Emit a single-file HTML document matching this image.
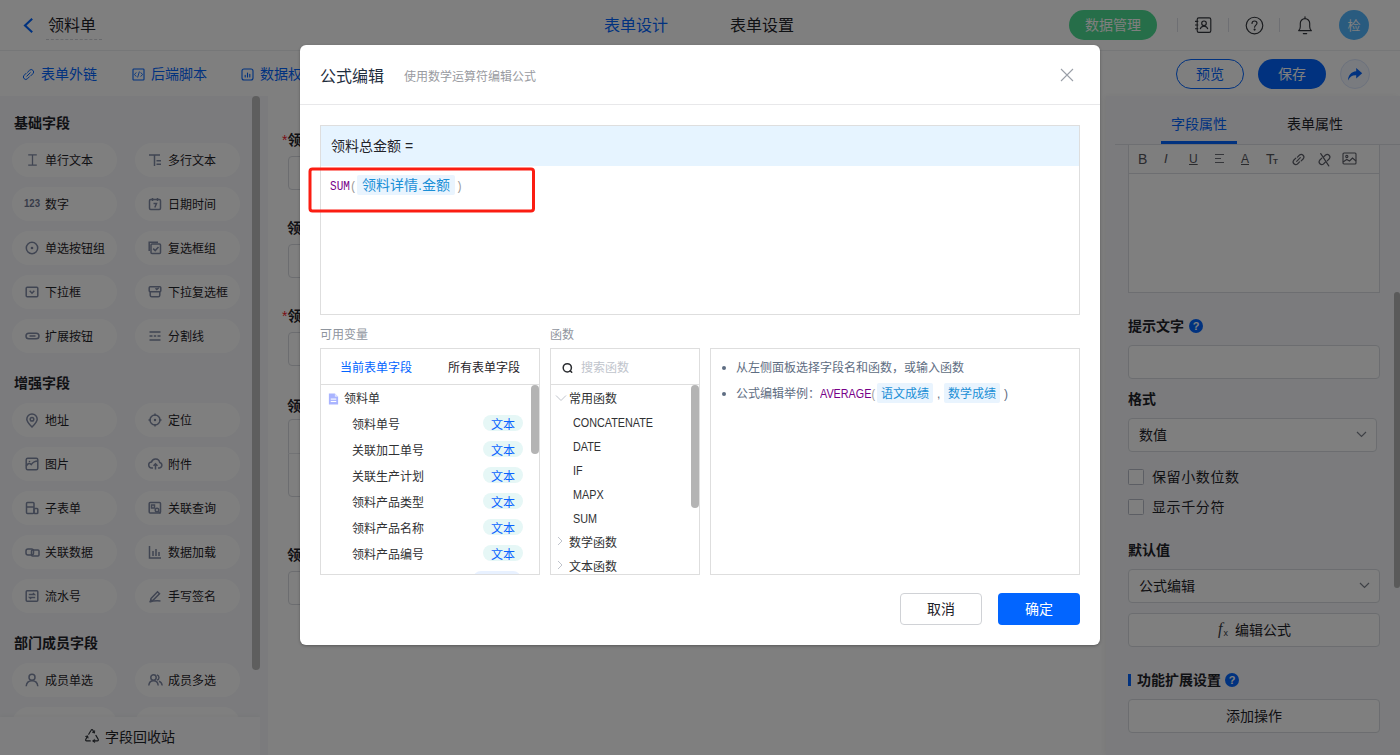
<!DOCTYPE html>
<html lang="zh-CN">
<head>
<meta charset="utf-8">
<title>领料单 - 公式编辑</title>
<style>
*{box-sizing:border-box;margin:0;padding:0}
html,body{width:1400px;height:755px;overflow:hidden;background:#fff}
body{font-family:"Liberation Sans","Noto Sans CJK SC",sans-serif;font-size:14px;color:#1f2329;-webkit-font-smoothing:antialiased}
#app{position:relative;width:1400px;height:755px;overflow:hidden;background:#fff}
.abs{position:absolute}
svg{display:block}
.t{position:absolute;white-space:nowrap;line-height:20px}
/* ---------- header ---------- */
#hdr{position:absolute;left:0;top:0;width:1400px;height:51px;background:#fff;border-bottom:1px solid #eceef1}
#bar{position:absolute;left:0;top:51px;width:1400px;height:45px;background:#fff}
/* ---------- sidebar ---------- */
#side{position:absolute;left:0;top:96px;width:260px;height:659px;background:#f6f7fa;overflow:hidden}
.sec{position:absolute;left:14px;font-weight:700;font-size:14px;line-height:20px;color:#1f2329}
.pill{position:absolute;width:105px;height:34px;border-radius:17px;background:#fff;font-size:12px;line-height:34px;color:#1f2329;white-space:nowrap}
.pill span{position:absolute;left:33px;top:1px}
.pill svg{position:absolute;left:13px;top:10px}
#sfoot{position:absolute;left:0;top:621px;width:260px;height:38px;background:#fdfdfe;box-shadow:0 -1px 4px rgba(0,0,0,.04)}
/* ---------- canvas ---------- */
#cv{position:absolute;left:260px;top:96px;width:846px;height:659px;background:#f6f7fa}
#card{position:absolute;left:8px;top:0;width:838px;height:659px;background:#fff}
/* ---------- right ---------- */
#rp{position:absolute;left:1106px;top:96px;width:294px;height:659px;background:#f6f7fa;box-shadow:-2px 0 6px rgba(0,0,0,.05)}
.inp{position:absolute;background:#fff;border:1px solid #d8dbe1;border-radius:4px}
.lab{position:absolute;font-weight:700;font-size:14px;line-height:20px;color:#1f2329;white-space:nowrap}
/* ---------- overlay & modal ---------- */
#mask{position:absolute;left:0;top:0;width:1400px;height:755px;background:rgba(0,0,0,.5)}
#dlg{position:absolute;left:300px;top:45px;width:800px;height:600px;background:#fff;border-radius:6px;overflow:hidden;box-shadow:0 1px 3px rgba(0,0,0,.3)}
.box{position:absolute;border:1px solid #dedede;background:#fff}
.g{color:#8f959e}
.li{position:absolute;left:31px;font-size:12px;line-height:18px;color:#303133;white-space:nowrap}
.tag{position:absolute;left:162px;width:40px;height:16px;border-radius:8px;background:#e6f7f6;color:#0a64ff;font-size:12px;line-height:20px;text-align:center}
.fn{position:absolute;font-size:12px;line-height:18px;color:#303133;white-space:nowrap}
.chip{display:inline-block;background:#e9f4fe;color:#1a8fd6;border-radius:2px}
.lat{display:inline-block;transform:scaleX(.9);transform-origin:0 50%}
</style>
</head>
<body>
<div id="app">
<div id="hdr">
  <svg class="abs" style="left:22px;top:17px" width="12" height="17" viewBox="0 0 12 17"><path d="M10.200 1.800L3 8.500L10.200 15.200" fill="none" stroke="#0265ff" stroke-width="2.100"/></svg>
  <div class="t" style="left:48px;top:14px;font-size:16px;line-height:24px;color:#1f2329">领料单</div>
  <div class="abs" style="left:46px;top:39px;width:56px;height:0;border-top:1px dashed #d0d3d9"></div>
  <div class="t" style="left:604px;top:14px;font-size:16px;line-height:24px;color:#0265ff">表单设计</div>
  <div class="t" style="left:730px;top:14px;font-size:16px;line-height:24px;color:#1f2329">表单设置</div>
  <div class="abs" style="left:1069px;top:10px;width:88px;height:30px;border-radius:15px;background:#4cdc92;color:#fff;font-size:14px;line-height:30px;text-align:center">数据管理</div>
  <div class="abs" style="left:1177px;top:18px;width:1px;height:14px;background:#dcdfe6"></div>
  <div class="abs" style="left:1228px;top:18px;width:1px;height:14px;background:#dcdfe6"></div>
  <div class="abs" style="left:1279px;top:18px;width:1px;height:14px;background:#dcdfe6"></div>
  <!-- contacts icon -->
  <svg class="abs" style="left:1193.600px;top:16px" width="18" height="18" viewBox="0 0 18 18" fill="none" stroke="#33363c" stroke-width="1.15"><rect x="3.2" y="1.8" width="13.6" height="14.6" rx="1.6"/><circle cx="10" cy="7.3" r="2.3"/><path d="M6.2 13.2c.4-2 1.9-3 3.8-3s3.400 1 3.800 3"/><path d="M1 5.300h3.300M1 9h3.300M1 12.700h3.300"/></svg>
  <!-- help icon -->
  <svg class="abs" style="left:1245px;top:16px" width="19" height="19" viewBox="0 0 19 19" fill="none" stroke="#33363c" stroke-width="1.15"><circle cx="9.500" cy="9.500" r="8.300"/><path d="M7 7.500c0-1.500 1.100-2.500 2.500-2.500s2.500 1 2.500 2.300c0 1.700-2.400 1.900-2.400 3.900" stroke-linecap="round"/><circle cx="9.600" cy="13.600" r=".5" fill="#2b2f36"/></svg>
  <!-- bell icon -->
  <svg class="abs" style="left:1297px;top:15px" width="16" height="20" viewBox="0 0 16 20" fill="none" stroke="#33363c" stroke-width="1.15" stroke-linecap="round" stroke-linejoin="round"><path d="M8 1.700v1.200"/><path d="M1.600 15.600c1.300-1 1.700-2.200 1.700-3.800V8.300a4.700 4.700 0 0 1 9.400 0v3.500c0 1.600.4 2.800 1.700 3.800z"/><path d="M6.300 18.600h3.400"/></svg>
  <div class="abs" style="left:1339px;top:10px;width:30px;height:30px;border-radius:15px;background:#52b6ff;color:#fff;font-size:13px;line-height:31px;text-align:center">检</div>
</div>

<div id="bar">
  <svg class="abs" style="left:22px;top:17px" width="13" height="13" viewBox="0 0 13 13" fill="none" stroke="#0265ff" stroke-width="1" stroke-linecap="round"><path d="M5.500 4.300l2-2a2.400 2.400 0 0 1 3.400 3.400l-2 2"/><path d="M7.500 8.700l-2 2a2.400 2.400 0 0 1-3.400-3.400l2-2"/><path d="M4.800 8.200l3.400-3.400"/></svg>
  <div class="t" style="left:41px;top:13px;font-size:14px;color:#0265ff">表单外链</div>
  <svg class="abs" style="left:131.500px;top:16.500px" width="13" height="13" viewBox="0 0 13 13" fill="none" stroke="#0265ff" stroke-width="1.100"><rect x="1" y="1" width="11" height="11" rx=".8"/><path d="M4.300 4.400L2.500 6.500l1.800 2.100M8.700 4.400l1.800 2.100-1.800 2.100M7.400 3.500L5.600 9.500" stroke-width=".9"/></svg>
  <div class="t" style="left:151px;top:13px;font-size:14px;color:#0265ff">后端脚本</div>
  <svg class="abs" style="left:240.500px;top:16.500px" width="13" height="13" viewBox="0 0 13 13" fill="none" stroke="#0265ff" stroke-width="1.100"><rect x="1" y="1" width="11" height="11" rx="2"/><path d="M4.200 9V7.200M6.500 9V5M8.800 9V6.300" stroke-linecap="round"/></svg>
  <div class="t" style="left:260px;top:13px;font-size:14px;color:#0265ff">数据权限</div>
  <div class="abs" style="left:1176px;top:8px;width:68px;height:30px;border:1px solid #0265ff;border-radius:15px;color:#0265ff;font-size:14px;line-height:28px;text-align:center">预览</div>
  <div class="abs" style="left:1258px;top:8px;width:68px;height:30px;border-radius:15px;background:#0265ff;color:#fff;font-size:14px;line-height:30px;text-align:center">保存</div>
  <div class="abs" style="left:1340px;top:8px;width:30px;height:30px;border-radius:15px;background:#f2f6fe;border:1px solid #d9e4fb"></div>
  <svg class="abs" style="left:1347px;top:16px" width="16" height="15" viewBox="0 0 16 15"><path d="M9.200 1l6 5.200-6 5.200V8.300C5.300 8.100 2.700 9.700 1 13.500 1.200 8.500 4 4.600 9.200 4.200z" fill="#0265ff"/></svg>
</div>

<div id="side">
  <div class="sec" style="top:17px">基础字段</div>
  <div class="pill" style="left:12px;top:47px"><svg width="14" height="14" viewBox="0 0 14 14" fill="none" stroke="#808aa5" stroke-width="1.5"><path d="M3.200 1.800h8.600M3.200 12.200h8.600M7.500 1.800v10.400" stroke-width="1.300"/></svg><span>单行文本</span></div>
  <div class="pill" style="left:135px;top:47px"><svg width="14" height="14" viewBox="0 0 14 14" fill="none" stroke="#808aa5" stroke-width="1.5"><path d="M1 2h11M6.500 2v11M8.500 7.800h4.500M8.500 11.300h4.500"/></svg><span>多行文本</span></div>
  <div class="pill" style="left:12px;top:91px"><svg width="18" height="14" viewBox="0 0 18 14" style="left:12px"><text x="0" y="9.800" font-family="Liberation Sans, sans-serif" font-weight="700" font-size="10" fill="#6f7893" stroke="none" textLength="16" lengthAdjust="spacingAndGlyphs">123</text></svg><span>数字</span></div>
  <div class="pill" style="left:135px;top:91px"><svg width="14" height="14" viewBox="0 0 14 14" fill="none" stroke="#808aa5" stroke-width="1.5"><rect x="1.500" y="2.500" width="11" height="10" rx="1.200"/><path d="M4.500 1v3M9.500 1v3M5.500 6.500h3l-1.700 4"/></svg><span>日期时间</span></div>
  <div class="pill" style="left:12px;top:135px"><svg width="14" height="14" viewBox="0 0 14 14" fill="none" stroke="#808aa5" stroke-width="1.5"><circle cx="7" cy="7" r="5.700"/><circle cx="7" cy="7" r="1.300" fill="#7a839d" stroke="none"/></svg><span>单选按钮组</span></div>
  <div class="pill" style="left:135px;top:135px"><svg width="14" height="14" viewBox="0 0 14 14" fill="none" stroke="#808aa5" stroke-width="1.5"><rect x="3" y="3" width="9.500" height="9.500" rx="1"/><path d="M1.200 10V1.200H10"/><path d="M5.200 7.600l2 2 3.300-3.600"/></svg><span>复选框组</span></div>
  <div class="pill" style="left:12px;top:179px"><svg width="14" height="14" viewBox="0 0 14 14" fill="none" stroke="#808aa5" stroke-width="1.5"><rect x="1.200" y="2.200" width="11.600" height="9.600" rx="1"/><path d="M4.700 5.800L7 8.200l2.300-2.400"/></svg><span>下拉框</span></div>
  <div class="pill" style="left:135px;top:179px"><svg width="14" height="14" viewBox="0 0 14 14" fill="none" stroke="#808aa5" stroke-width="1.5"><rect x="1.200" y="1.800" width="11.600" height="5" rx="1"/><path d="M2.200 6.800v3.400a1.500 1.500 0 0 0 1.500 1.500h6.600a1.500 1.500 0 0 0 1.500-1.500V6.800"/><path d="M7.500 3.200l1.300 1.300 2-1.800"/></svg><span>下拉复选框</span></div>
  <div class="pill" style="left:12px;top:223px"><svg width="15" height="14" viewBox="0 0 15 14" fill="none" stroke="#808aa5" stroke-width="1.5"><rect x="1" y="4.200" width="13" height="5.600" rx="2.800"/><path d="M4.500 7h6"/></svg><span>扩展按钮</span></div>
  <div class="pill" style="left:135px;top:223px"><svg width="14" height="14" viewBox="0 0 14 14" fill="none" stroke="#808aa5" stroke-width="1.5"><path d="M1.500 3h11M1.500 7h3M5.800 7h2.400M9.500 7h3M1.500 11h11"/></svg><span>分割线</span></div>
  <div class="sec" style="top:277px">增强字段</div>
  <div class="pill" style="left:12px;top:307px"><svg width="14" height="15" viewBox="0 0 14 15" fill="none" stroke="#808aa5" stroke-width="1.5"><path d="M7 14C4 11 1.800 8.700 1.800 6.200a5.200 5.200 0 0 1 10.400 0C12.200 8.700 10 11 7 14z"/><circle cx="7" cy="6.200" r="1.800"/></svg><span>地址</span></div>
  <div class="pill" style="left:135px;top:307px"><svg width="14" height="14" viewBox="0 0 14 14" fill="none" stroke="#808aa5" stroke-width="1.5"><circle cx="7" cy="7" r="5"/><circle cx="7" cy="7" r="1.200" fill="#7a839d" stroke="none"/><path d="M7 .5v2.500M7 11v2.500M.5 7h2.500M11 7h2.500"/></svg><span>定位</span></div>
  <div class="pill" style="left:12px;top:351px"><svg width="14" height="14" viewBox="0 0 14 14" fill="none" stroke="#808aa5" stroke-width="1.5"><rect x="1.200" y="1.200" width="11.600" height="11.600" rx="1.500"/><path d="M1.200 9c2-3 3.500-3 5-1.500 1.500-2 4-3.500 6.600-3.500"/><circle cx="4.500" cy="4.500" r=".8" fill="#7a839d" stroke="none"/></svg><span>图片</span></div>
  <div class="pill" style="left:135px;top:351px"><svg width="15" height="14" viewBox="0 0 15 14" fill="none" stroke="#808aa5" stroke-width="1.5"><path d="M5 11H4a3 3 0 0 1-.500-6 4.200 4.200 0 0 1 8.200 0.500A2.800 2.800 0 0 1 11.500 11H10"/><path d="M7.500 12.500V7M5.500 8.800l2-2 2 2"/></svg><span>附件</span></div>
  <div class="pill" style="left:12px;top:395px"><svg width="14" height="14" viewBox="0 0 14 14" fill="none" stroke="#808aa5" stroke-width="1.5"><rect x="1.500" y="1.500" width="7.500" height="11" rx="1"/><path d="M1.500 6h7.500"/><rect x="9" y="7.500" width="3.800" height="5" rx=".8"/></svg><span>子表单</span></div>
  <div class="pill" style="left:135px;top:395px"><svg width="14" height="14" viewBox="0 0 14 14" fill="none" stroke="#808aa5" stroke-width="1.5"><rect x="1.200" y="1.500" width="11.300" height="10.500" rx="1"/><rect x="3.500" y="4" width="3" height="3"/><circle cx="9" cy="9" r="1.800"/><path d="M10.500 10.500l2 2"/></svg><span>关联查询</span></div>
  <div class="pill" style="left:12px;top:439px"><svg width="15" height="14" viewBox="0 0 15 14" fill="none" stroke="#808aa5" stroke-width="1.5"><rect x="1" y="4" width="7.500" height="6" rx="2"/><rect x="6.500" y="5" width="7.500" height="6" rx="1"/></svg><span>关联数据</span></div>
  <div class="pill" style="left:135px;top:439px"><svg width="14" height="14" viewBox="0 0 14 14" fill="none" stroke="#808aa5" stroke-width="1.5"><path d="M1.500 1v12h11.500"/><path d="M5 11V6M8 11V4M11 11V7"/></svg><span>数据加载</span></div>
  <div class="pill" style="left:12px;top:483px"><svg width="14" height="14" viewBox="0 0 14 14" fill="none" stroke="#808aa5" stroke-width="1.5"><rect x="1.200" y="1.800" width="11.600" height="10.400" rx="1"/><path d="M3.800 5.500h5.500l-1.400-1.400M10.200 8.500H4.700l1.400 1.400"/></svg><span>流水号</span></div>
  <div class="pill" style="left:135px;top:483px"><svg width="14" height="14" viewBox="0 0 14 14" fill="none" stroke="#808aa5" stroke-width="1.5"><path d="M3 9.500l6.500-6.800 2 2L5 11.300l-2.500.5z"/><path d="M1.500 13c3-1 6-1.500 11-1"/></svg><span>手写签名</span></div>
  <div class="sec" style="top:537px">部门成员字段</div>
  <div class="pill" style="left:12px;top:567px"><svg width="14" height="14" viewBox="0 0 14 14" fill="none" stroke="#808aa5" stroke-width="1.5"><circle cx="7" cy="4.300" r="3"/><path d="M1.200 13.200c.3-3.400 2.600-5.400 5.800-5.400s5.500 2 5.800 5.400"/></svg><span>成员单选</span></div>
  <div class="pill" style="left:135px;top:567px"><svg width="15" height="14" viewBox="0 0 15 14" fill="none" stroke="#808aa5" stroke-width="1.5"><circle cx="5.500" cy="4.500" r="2.700"/><path d="M.8 12.500c.3-3 2.200-4.800 4.700-4.800s4.400 1.800 4.700 4.800"/><path d="M9 1.900a2.700 2.700 0 0 1 0 5.200M11 8.200c1.800.6 2.900 2.100 3.200 4.300"/></svg><span>成员多选</span></div>
  <div class="pill" style="left:12px;top:611px"><svg width="14" height="14" viewBox="0 0 14 14" fill="none" stroke="#808aa5" stroke-width="1.5"><rect x="5" y="1" width="4" height="3"/><path d="M7 4v3M2.500 10V7h9v3"/><rect x="1" y="10" width="3" height="3"/><rect x="10" y="10" width="3" height="3"/></svg><span>部门单选</span></div>
  <div class="pill" style="left:135px;top:611px"><svg width="14" height="14" viewBox="0 0 14 14" fill="none" stroke="#808aa5" stroke-width="1.5"><rect x="5" y="1" width="4" height="3"/><path d="M7 4v6M2.500 10V7h9v3"/><rect x="1" y="10" width="3" height="3"/><rect x="5.500" y="10" width="3" height="3"/><rect x="10" y="10" width="3" height="3"/></svg><span>部门多选</span></div>
  <div class="abs" style="left:252px;top:0;width:8px;height:574px;border-radius:4px;background:#bdbdbd"></div>
  <div id="sfoot"><svg class="abs" style="left:84px;top:11px" width="16" height="15" viewBox="0 0 16 15" fill="none" stroke="#2b2f36" stroke-width="1.150" stroke-linejoin="round" stroke-linecap="round"><path d="M4.700 6.200L7.100 2.200a1 1 0 0 1 1.800 0l1.500 2.600"/><path d="M10.700 2.900l-.2 2.100-2-.6z" fill="#2b2f36" stroke-width=".6"/><path d="M11.900 7.400l2.300 3.900a1 1 0 0 1-.9 1.600H9.200"/><path d="M10.400 11.400l-1.800 1.500 1.800 1.500z" fill="#2b2f36" stroke-width=".6"/><path d="M6.300 12.900H2.700a1 1 0 0 1-.9-1.600l1.500-2.600"/><path d="M1.700 8.300l2-.6.500 2.100z" fill="#2b2f36" stroke-width=".6"/></svg><div class="t" style="left:105px;top:10px;font-size:14px;color:#1f2329">字段回收站</div></div>
</div>

<div id="cv">
  <div id="card">
    <div class="lab" style="left:14px;top:34px"><span style="color:#f5222d;font-weight:400">*</span>领料单号</div>
    <div class="inp" style="left:20px;top:60px;width:380px;height:34px"></div>
    <div class="lab" style="left:19px;top:122px">领料日期</div>
    <div class="inp" style="left:20px;top:148px;width:380px;height:34px"></div>
    <div class="lab" style="left:14px;top:210px"><span style="color:#f5222d;font-weight:400">*</span>领料人</div>
    <div class="inp" style="left:20px;top:236px;width:380px;height:34px"></div>
    <div class="lab" style="left:19px;top:300px">领料详情</div>
    <div class="inp" style="left:20px;top:323px;width:780px;height:78px"></div>
    <div class="abs" style="left:20px;top:357px;width:780px;height:1px;background:#e4e6ea"></div>
    <div class="lab" style="left:19px;top:449px">领料总金额</div>
    <div class="inp" style="left:20px;top:475px;width:380px;height:34px"></div>
  </div>
</div>

<div id="rp">
  <div class="abs" style="left:9px;top:48px;width:285px;height:1px;background:#dcdfe4"></div>
  <div class="t" style="left:65px;top:18px;font-size:14px;color:#0265ff">字段属性</div>
  <div class="t" style="left:181px;top:18px;font-size:14px;color:#1f2329">表单属性</div>
  <div class="abs" style="left:55px;top:45px;width:76px;height:3px;background:#0265ff"></div>
  <!-- rich editor -->
  <div class="abs" style="left:22px;top:49px;width:252px;height:148px;background:#fff;border:1px solid #dadde2;border-top:none"></div>
  <div class="abs" style="left:22px;top:49px;width:252px;height:29px;background:#fcfcfd;border:1px solid #dadde2;border-top:none"></div>
  <div class="t" style="left:32px;top:53px;font-size:14px;font-weight:400;color:#55565c;font-family:'Liberation Sans',sans-serif">B</div>
  <div class="t" style="left:58px;top:53px;font-size:13px;font-style:italic;color:#55565c;font-family:'Liberation Sans',sans-serif">I</div>
  <div class="t" style="left:83px;top:53px;font-size:12px;text-decoration:underline;color:#55565c;font-family:'Liberation Sans',sans-serif">U</div>
  <svg class="abs" style="left:108px;top:57px" width="11" height="11" viewBox="0 0 11 11" fill="none" stroke="#6a6c74" stroke-width="1"><path d="M1 1.500h9M1 5.500h6M1 9.500h9"/></svg>
  <div class="t" style="left:135px;top:53px;font-size:12px;text-decoration:underline;color:#55565c;font-family:'Liberation Sans',sans-serif">A</div>
  <div class="t" style="left:160px;top:53px;font-size:14px;font-weight:400;color:#55565c;font-family:'Liberation Sans',sans-serif;letter-spacing:-1.500px">T<span style="font-size:8px;font-weight:700">T</span></div>
  <svg class="abs" style="left:185px;top:55.500px" width="15" height="15" viewBox="0 0 14 14" fill="none" stroke="#5b5d66" stroke-width="1.100" stroke-linecap="round"><path d="M6 4.800l2-2a2.500 2.500 0 0 1 3.500 3.500l-2 2"/><path d="M8 9.200l-2 2a2.500 2.500 0 0 1-3.500-3.500l2-2"/><path d="M5.300 8.700l3.400-3.400"/></svg>
  <svg class="abs" style="left:211px;top:55.500px" width="15" height="15" viewBox="0 0 14 14" fill="none" stroke="#5b5d66" stroke-width="1.100" stroke-linecap="round"><path d="M6 4.800l2-2a2.500 2.500 0 0 1 3.500 3.500l-2 2"/><path d="M8 9.200l-2 2a2.500 2.500 0 0 1-3.500-3.500l2-2"/><path d="M3.500 1.500l7.500 11.500"/></svg>
  <svg class="abs" style="left:236px;top:56px" width="15" height="13" viewBox="0 0 15 13" fill="none" stroke="#5b5d66" stroke-width="1.100"><rect x="1" y="1" width="13" height="11" rx="1"/><circle cx="4.800" cy="4.500" r="1.100"/><path d="M1 10l3.800-2.500 2.700 1.500 3-3 3.500 3"/></svg>

  <div class="lab" style="left:22px;top:220px">提示文字</div>
  <div class="abs" style="left:83px;top:223px;width:14px;height:14px;border-radius:7px;background:#0265ff;color:#fff;font-size:11px;font-weight:700;line-height:14px;text-align:center;font-family:'Liberation Sans',sans-serif">?</div>
  <div class="inp" style="left:22px;top:249px;width:252px;height:34px"></div>
  <div class="lab" style="left:22px;top:293px">格式</div>
  <div class="inp" style="left:22px;top:322px;width:249px;height:34px"></div>
  <div class="t" style="left:33px;top:329px;font-size:14px;color:#1f2329">数值</div>
  <svg class="abs" style="left:250px;top:335px" width="11" height="7" viewBox="0 0 11 7"><path d="M1 1l4.500 4.500L10 1" fill="none" stroke="#7d828c" stroke-width="1.200"/></svg>
  <div class="abs" style="left:22px;top:373px;width:16px;height:16px;border:1px solid #b9bcc8;border-radius:1.5px;background:#fff"></div>
  <div class="t" style="left:46px;top:371px;font-size:14px;color:#1f2329;letter-spacing:.6px">保留小数位数</div>
  <div class="abs" style="left:22px;top:403px;width:16px;height:16px;border:1px solid #b9bcc8;border-radius:1.5px;background:#fff"></div>
  <div class="t" style="left:46px;top:401px;font-size:14px;color:#1f2329;letter-spacing:.6px">显示千分符</div>
  <div class="lab" style="left:22px;top:444px">默认值</div>
  <div class="inp" style="left:22px;top:473px;width:252px;height:34px"></div>
  <div class="t" style="left:33px;top:480px;font-size:14px;color:#1f2329">公式编辑</div>
  <svg class="abs" style="left:253px;top:486px" width="11" height="7" viewBox="0 0 11 7"><path d="M1 1l4.500 4.500L10 1" fill="none" stroke="#7d828c" stroke-width="1.200"/></svg>
  <div class="inp" style="left:22px;top:517px;width:252px;height:34px"></div>
  <div class="t" style="left:112px;top:523px;font-size:16px;font-style:italic;color:#3a3d44;font-family:'Liberation Serif',serif">f<span style="font-size:9px;font-style:normal;font-family:'Liberation Sans',sans-serif;position:relative;top:2px;left:1px">x</span></div>
  <div class="t" style="left:129px;top:524px;font-size:14px;color:#1f2329">编辑公式</div>
  <div class="abs" style="left:22px;top:578px;width:3px;height:12px;background:#0265ff"></div>
  <div class="lab" style="left:31px;top:574px">功能扩展设置</div>
  <div class="abs" style="left:119px;top:577px;width:14px;height:14px;border-radius:7px;background:#0265ff;color:#fff;font-size:11px;font-weight:700;line-height:14px;text-align:center;font-family:'Liberation Sans',sans-serif">?</div>
  <div class="inp" style="left:22px;top:603px;width:252px;height:34px"></div>
  <div class="t" style="left:120px;top:610px;font-size:14px;color:#1f2329">添加操作</div>
  <div class="abs" style="left:288px;top:196px;width:6px;height:296px;border-radius:3px;background:#b4b4b4"></div>
</div>

<div id="mask"></div>
<div id="dlg">
  <div class="t" style="left:20px;top:20px;font-size:16px;line-height:24px;color:#1f2d3d">公式编辑</div>
  <div class="t" style="left:104px;top:23px;font-size:12px;line-height:18px;color:#999ba1">使用数学运算符编辑公式</div>
  <svg class="abs" style="left:760px;top:23px" width="14" height="14" viewBox="0 0 14 14"><path d="M1 1L13 13M13 1L1 13" stroke="#9a9fa8" stroke-width="1.1" fill="none"/></svg>
  <div class="abs" style="left:0;top:59px;width:800px;height:1px;background:#e8e8ea"></div>

  <!-- editor -->
  <div class="box" style="left:20px;top:80px;width:760px;height:190px">
    <div class="abs" style="left:0;top:0;width:758px;height:40px;background:#e6f4ff"></div>
    <div class="t" style="left:10px;top:10px;font-size:14px;color:#1f2329">领料总金额 =</div>
    <div class="t" style="left:9px;top:51px;font-family:'Liberation Mono','DejaVu Sans Mono',monospace;font-size:12px;line-height:20px;color:#770088;transform:scaleX(.92);transform-origin:0 50%">SUM<span style="color:#9a9a9a">(</span></div>
    <div class="abs" style="left:36px;top:49px;width:98px;height:20px;background:#e9f4fe;border-radius:2px"></div>
    <div class="t" style="left:41px;top:49px;font-size:14px;line-height:20px;color:#1a8fd6">领料详情.金额</div>
    <div class="t" style="left:135px;top:51px;font-family:'Liberation Mono','DejaVu Sans Mono',monospace;font-size:12px;line-height:20px;color:#9a9a9a;transform:scaleX(.92);transform-origin:0 50%">)</div>
  </div>
  <svg class="abs" style="left:0;top:110px" width="250" height="70" viewBox="0 0 250 70"><rect x="10" y="14" width="223.500" height="42" rx="2.500" fill="none" stroke="#fb1d12" stroke-width="3"/></svg>

  <div class="t g" style="left:20px;top:281px;font-size:12px;line-height:18px">可用变量</div>
  <div class="t g" style="left:250px;top:281px;font-size:12px;line-height:18px">函数</div>

  <!-- variables panel -->
  <div class="box" style="left:20px;top:303px;width:220px;height:227px;overflow:hidden">
    <div class="abs" style="left:0;top:35px;width:218px;height:1px;background:#dedede"></div>
    <div class="t" style="left:19px;top:10px;font-size:12px;line-height:18px;color:#0265ff">当前表单字段</div>
    <div class="t" style="left:127px;top:10px;font-size:12px;line-height:18px;color:#1f2329">所有表单字段</div>
    <svg class="abs" style="left:6.500px;top:43.500px" width="11" height="12" viewBox="0 0 11 13"><path d="M0.5 0.5h6.5l3.5 3.5v8.5h-10z" fill="#a9b4ff"/><path d="M7 0.5v3.5h3.5z" fill="#dfe3ff"/><rect x="2.5" y="6" width="6" height="1.2" fill="#fff"/><rect x="2.5" y="8.6" width="6" height="1.2" fill="#fff"/></svg>
    <div class="li" style="left:23px;top:41px">领料单</div>
    <div class="li" style="top:67px">领料单号</div><div class="tag" style="top:66px">文本</div>
    <div class="li" style="top:93px">关联加工单号</div><div class="tag" style="top:92px">文本</div>
    <div class="li" style="top:119px">关联生产计划</div><div class="tag" style="top:118px">文本</div>
    <div class="li" style="top:145px">领料产品类型</div><div class="tag" style="top:144px">文本</div>
    <div class="li" style="top:171px">领料产品名称</div><div class="tag" style="top:170px">文本</div>
    <div class="li" style="top:197px">领料产品编号</div><div class="tag" style="top:196px">文本</div>
    <div class="li" style="top:227px">领料数量</div><div class="tag" style="top:222px;left:152px;width:48px;background:#e8f1ff;line-height:26px">数字</div>
    <div class="abs" style="left:210px;top:36px;width:8px;height:69px;border-radius:4px;background:#b4b4b4"></div>
  </div>

  <!-- functions panel -->
  <div class="box" style="left:250px;top:303px;width:150px;height:227px;overflow:hidden">
    <div class="abs" style="left:0;top:35px;width:148px;height:1px;background:#dedede"></div>
    <svg class="abs" style="left:10px;top:13px" width="13" height="13" viewBox="0 0 13 13"><circle cx="6.300" cy="5.800" r="4.100" fill="none" stroke="#2a2c30" stroke-width="1.500"/><path d="M9.300 8.900L10.700 10.300" stroke="#2a2c30" stroke-width="1.500" stroke-linecap="round"/></svg>
    <div class="t" style="left:30px;top:10px;font-size:12px;line-height:18px;color:#c0c4cc">搜索函数</div>
    <svg class="abs" style="left:3.500px;top:45px" width="12" height="8" viewBox="0 0 12 8"><path d="M1 1.5L6 6.5L11 1.5" fill="none" stroke="#c0c4cc" stroke-width="1"/></svg>
    <div class="fn" style="left:18px;top:41px">常用函数</div>
    <div class="fn lat" style="left:22px;top:65px">CONCATENATE</div>
    <div class="fn lat" style="left:22px;top:89px">DATE</div>
    <div class="fn lat" style="left:22px;top:113px">IF</div>
    <div class="fn lat" style="left:22px;top:137px">MAPX</div>
    <div class="fn lat" style="left:22px;top:161px">SUM</div>
    <svg class="abs" style="left:6px;top:187px" width="6" height="10" viewBox="0 0 6 10"><path d="M1 1L5 5L1 9" fill="none" stroke="#c0c4cc" stroke-width="1"/></svg>
    <div class="fn" style="left:18px;top:185px">数学函数</div>
    <svg class="abs" style="left:6px;top:211px" width="6" height="10" viewBox="0 0 6 10"><path d="M1 1L5 5L1 9" fill="none" stroke="#c0c4cc" stroke-width="1"/></svg>
    <div class="fn" style="left:18px;top:209px">文本函数</div>
    <div class="abs" style="left:140px;top:36px;width:8px;height:123px;border-radius:4px;background:#b4b4b4"></div>
  </div>

  <!-- description panel -->
  <div class="box" style="left:410px;top:303px;width:370px;height:227px;overflow:hidden">
    <div class="abs" style="left:11px;top:17px;width:4px;height:4px;border-radius:2px;background:#5e6d82"></div>
    <div class="t" style="left:25px;top:10px;font-size:12px;line-height:18px;color:#5e6d82">从左侧面板选择字段名和函数，或输入函数</div>
    <div class="abs" style="left:11px;top:43px;width:4px;height:4px;border-radius:2px;background:#5e6d82"></div>
    <div class="t" style="left:25px;top:36px;font-size:12px;line-height:18px;color:#5e6d82">公式编辑举例：<span class="lat" style="color:#770088">AVERAGE<span style="color:#9a9a9a">(</span></span></div>
    <div class="abs" style="left:166px;top:34px;width:56px;height:20px;background:#e9f4fe;border-radius:2px"></div>
    <div class="t" style="left:170px;top:36px;font-size:12px;line-height:18px;color:#1a8fd6">语文成绩</div>
    <div class="t" style="left:226px;top:36px;font-size:12px;line-height:18px;color:#5e6d82">,</div>
    <div class="abs" style="left:233px;top:34px;width:56px;height:20px;background:#e9f4fe;border-radius:2px"></div>
    <div class="t" style="left:237px;top:36px;font-size:12px;line-height:18px;color:#1a8fd6">数学成绩</div>
    <div class="t" style="left:293px;top:36px;font-size:12px;line-height:18px;color:#5e6d82">)</div>
  </div>

  <!-- footer -->
  <div class="abs" style="left:600px;top:548px;width:82px;height:32px;border:1px solid #d0d2d6;border-radius:4px;background:#fff;text-align:center;font-size:14px;line-height:30px;color:#1f2329">取消</div>
  <div class="abs" style="left:698px;top:548px;width:82px;height:32px;border-radius:4px;background:#0265ff;text-align:center;font-size:14px;line-height:32px;color:#fff">确定</div>
</div>

</div>
</body>
</html>
